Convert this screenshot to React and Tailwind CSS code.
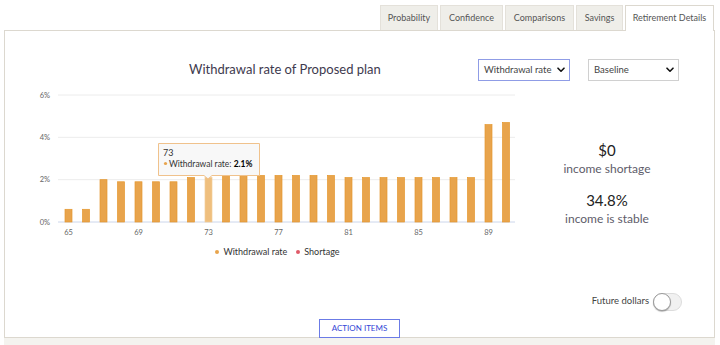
import React from "react";

const values = [0.6, 0.6, 2.0, 1.9, 1.9, 1.9, 1.9, 2.1, 2.1, 2.2, 2.2, 2.2, 2.2, 2.2, 2.2, 2.2, 2.1, 2.1, 2.1, 2.1, 2.1, 2.1, 2.1, 2.1, 4.6, 4.7];

function Chart() {
  const base = 137;
  const k = 127 / 6;
  const grid = [0, 2, 4, 6];
  return (
    <svg width="520" height="160" viewBox="0 0 520 160" className="block">
      {grid.map((g) => {
        const y = base - g * k;
        return (
          <g key={g}>
            <line x1="53" x2="510" y1={y} y2={y} stroke={g === 0 ? "#ccd6eb" : "#ececec"} strokeWidth="1" />
            <text x="45" y={y + 2.5} textAnchor="end" fontSize="7.5" fill="#666" fontFamily="Lato, sans-serif">{g}%</text>
          </g>
        );
      })}
      {values.map((v, i) => {
        const cx = 63.5 + i * 17.5;
        const h = v * k;
        const hl = i === 8;
        return (
          <rect key={i} x={cx - 3.5} y={base - h} width="7" height={h} fill={hl ? "#efbf7e" : "#e8a44c"} stroke={hl ? "#f2cd98" : "#e4972e"} strokeWidth="0.7" />
        );
      })}
      {[0, 4, 8, 12, 16, 20, 24].map((i) => (
        <text key={i} x={63.5 + i * 17.5} y="150" textAnchor="middle" fontSize="7.5" fill="#666" fontFamily="Lato, sans-serif">{65 + i}</text>
      ))}
      <path d="M153.5 58.5 H254.5 V90.5 H207 L203 94 L199 90.5 H153.5 Z" fill="rgba(247,247,247,0.9)" stroke="#f0c28c" strokeWidth="1" />
      <text x="158" y="71" fontSize="9" fill="#333" fontFamily="Lato, sans-serif">73</text>
      <circle cx="160.5" cy="78.5" r="1.6" fill="#e8a44c" />
      <text x="164" y="81.5" fontSize="8.5" fill="#333" fontFamily="Lato, sans-serif">
        Withdrawal rate: <tspan fontWeight="bold" fill="#000">2.1%</tspan>
      </text>
    </svg>
  );
}

function Chevron() {
  return (
    <svg width="8" height="6" viewBox="0 0 8 6" className="block">
      <path d="M1 1.2 L4 4.2 L7 1.2" fill="none" stroke="#111" strokeWidth="1.6" strokeLinecap="round" strokeLinejoin="round" />
    </svg>
  );
}

export default function App() {
  const tabs = [
    { label: "Probability", w: "w-[58px]" },
    { label: "Confidence", w: "w-[63px]" },
    { label: "Comparisons", w: "w-[69px]" },
    { label: "Savings", w: "w-[47px]" },
  ];
  return (
    <div className="w-[720px] h-[345px] bg-white overflow-hidden font-['Lato',sans-serif]">
      <div className="flex items-end justify-end gap-[2px] pr-[6px] h-[30px]">
        {tabs.map((t) => (
          <div key={t.label} className={`${t.w} h-[25px] bg-[#efeee9] flex items-center justify-center text-[9px] text-[#555] border-t border-l border-r border-[#e4e1da]`}>
            {t.label}
          </div>
        ))}
        <div className="w-[89px] h-[26px] -mb-px relative z-10 bg-white flex items-center justify-center text-[9px] text-[#555] border-t border-l border-r border-[#dcd8cf] pb-px">
          Retirement Details
        </div>
      </div>
      <div className="ml-[4px] w-[711px] bg-[#f4f3ef] h-[315px]">
        <div className="relative h-[308px] bg-white border border-[#dcd8cf] flex flex-col">
          <div className="flex items-center h-[22px] mt-[28px]">
            <div className="w-[473px] pl-[184px] text-[13px] text-[#3e3a4e]">Withdrawal rate of Proposed plan</div>
            <div className="w-[92px] h-[22px] border border-[#8f9ce6] flex items-center justify-between pl-[5px] pr-[4px] text-[9.5px] text-[#444]">
              <span>Withdrawal rate</span>
              <Chevron />
            </div>
            <div className="ml-[18px] w-[91px] h-[22px] border border-[#d0d0d0] flex items-center justify-between pl-[5px] pr-[4px] text-[9.5px] text-[#444]">
              <span>Baseline</span>
              <Chevron />
            </div>
          </div>
          <div className="flex mt-[4px]">
            <div className="w-[520px] h-[160px]">
              <Chart />
            </div>
            <div className="w-[164px] flex flex-col items-center pt-[56px]">
              <div className="h-[18px] leading-[18px] text-[15px] text-[#222]">$0</div>
              <div className="mt-[2px] h-[15px] leading-[15px] text-[12px] text-[#5e5c6a]">income shortage</div>
              <div className="mt-[15px] h-[18px] leading-[18px] text-[15px] text-[#222]">34.8%</div>
              <div className="mt-[2px] h-[15px] leading-[15px] text-[12px] text-[#5e5c6a]">income is stable</div>
            </div>
          </div>
          <div className="w-[545px] h-[14px] flex items-center justify-center gap-[9px] text-[9px] text-[#333]">
            <div className="flex items-center gap-[4px]">
              <span className="w-[4px] h-[4px] rounded-full bg-[#e8a44c]" />
              <span>Withdrawal rate</span>
            </div>
            <div className="flex items-center gap-[4px]">
              <span className="w-[4px] h-[4px] rounded-full bg-[#e05a68]" />
              <span>Shortage</span>
            </div>
          </div>
          <div className="mt-[34px] h-[19px] flex items-center justify-end pr-[32px] gap-[4px]">
            <span className="text-[9.5px] text-[#444]">Future dollars</span>
            <div className="w-[29px] h-[18px] rounded-full bg-[#f1f1f1] border border-[#dcdcdc] flex items-center">
              <div className="w-[18px] h-[18px] -ml-px rounded-full bg-white border border-[#9a9a9a] shadow-[0_1px_1px_rgba(0,0,0,0.25)]" />
            </div>
          </div>
          <div className="mt-[8px] flex justify-center">
            <div className="w-[81px] h-[19px] bg-white border border-[#6b7be6] flex items-center justify-center text-[8px] text-[#3347d6] relative z-10">
              ACTION ITEMS
            </div>
          </div>
        </div>
      </div>
    </div>
  );
}
